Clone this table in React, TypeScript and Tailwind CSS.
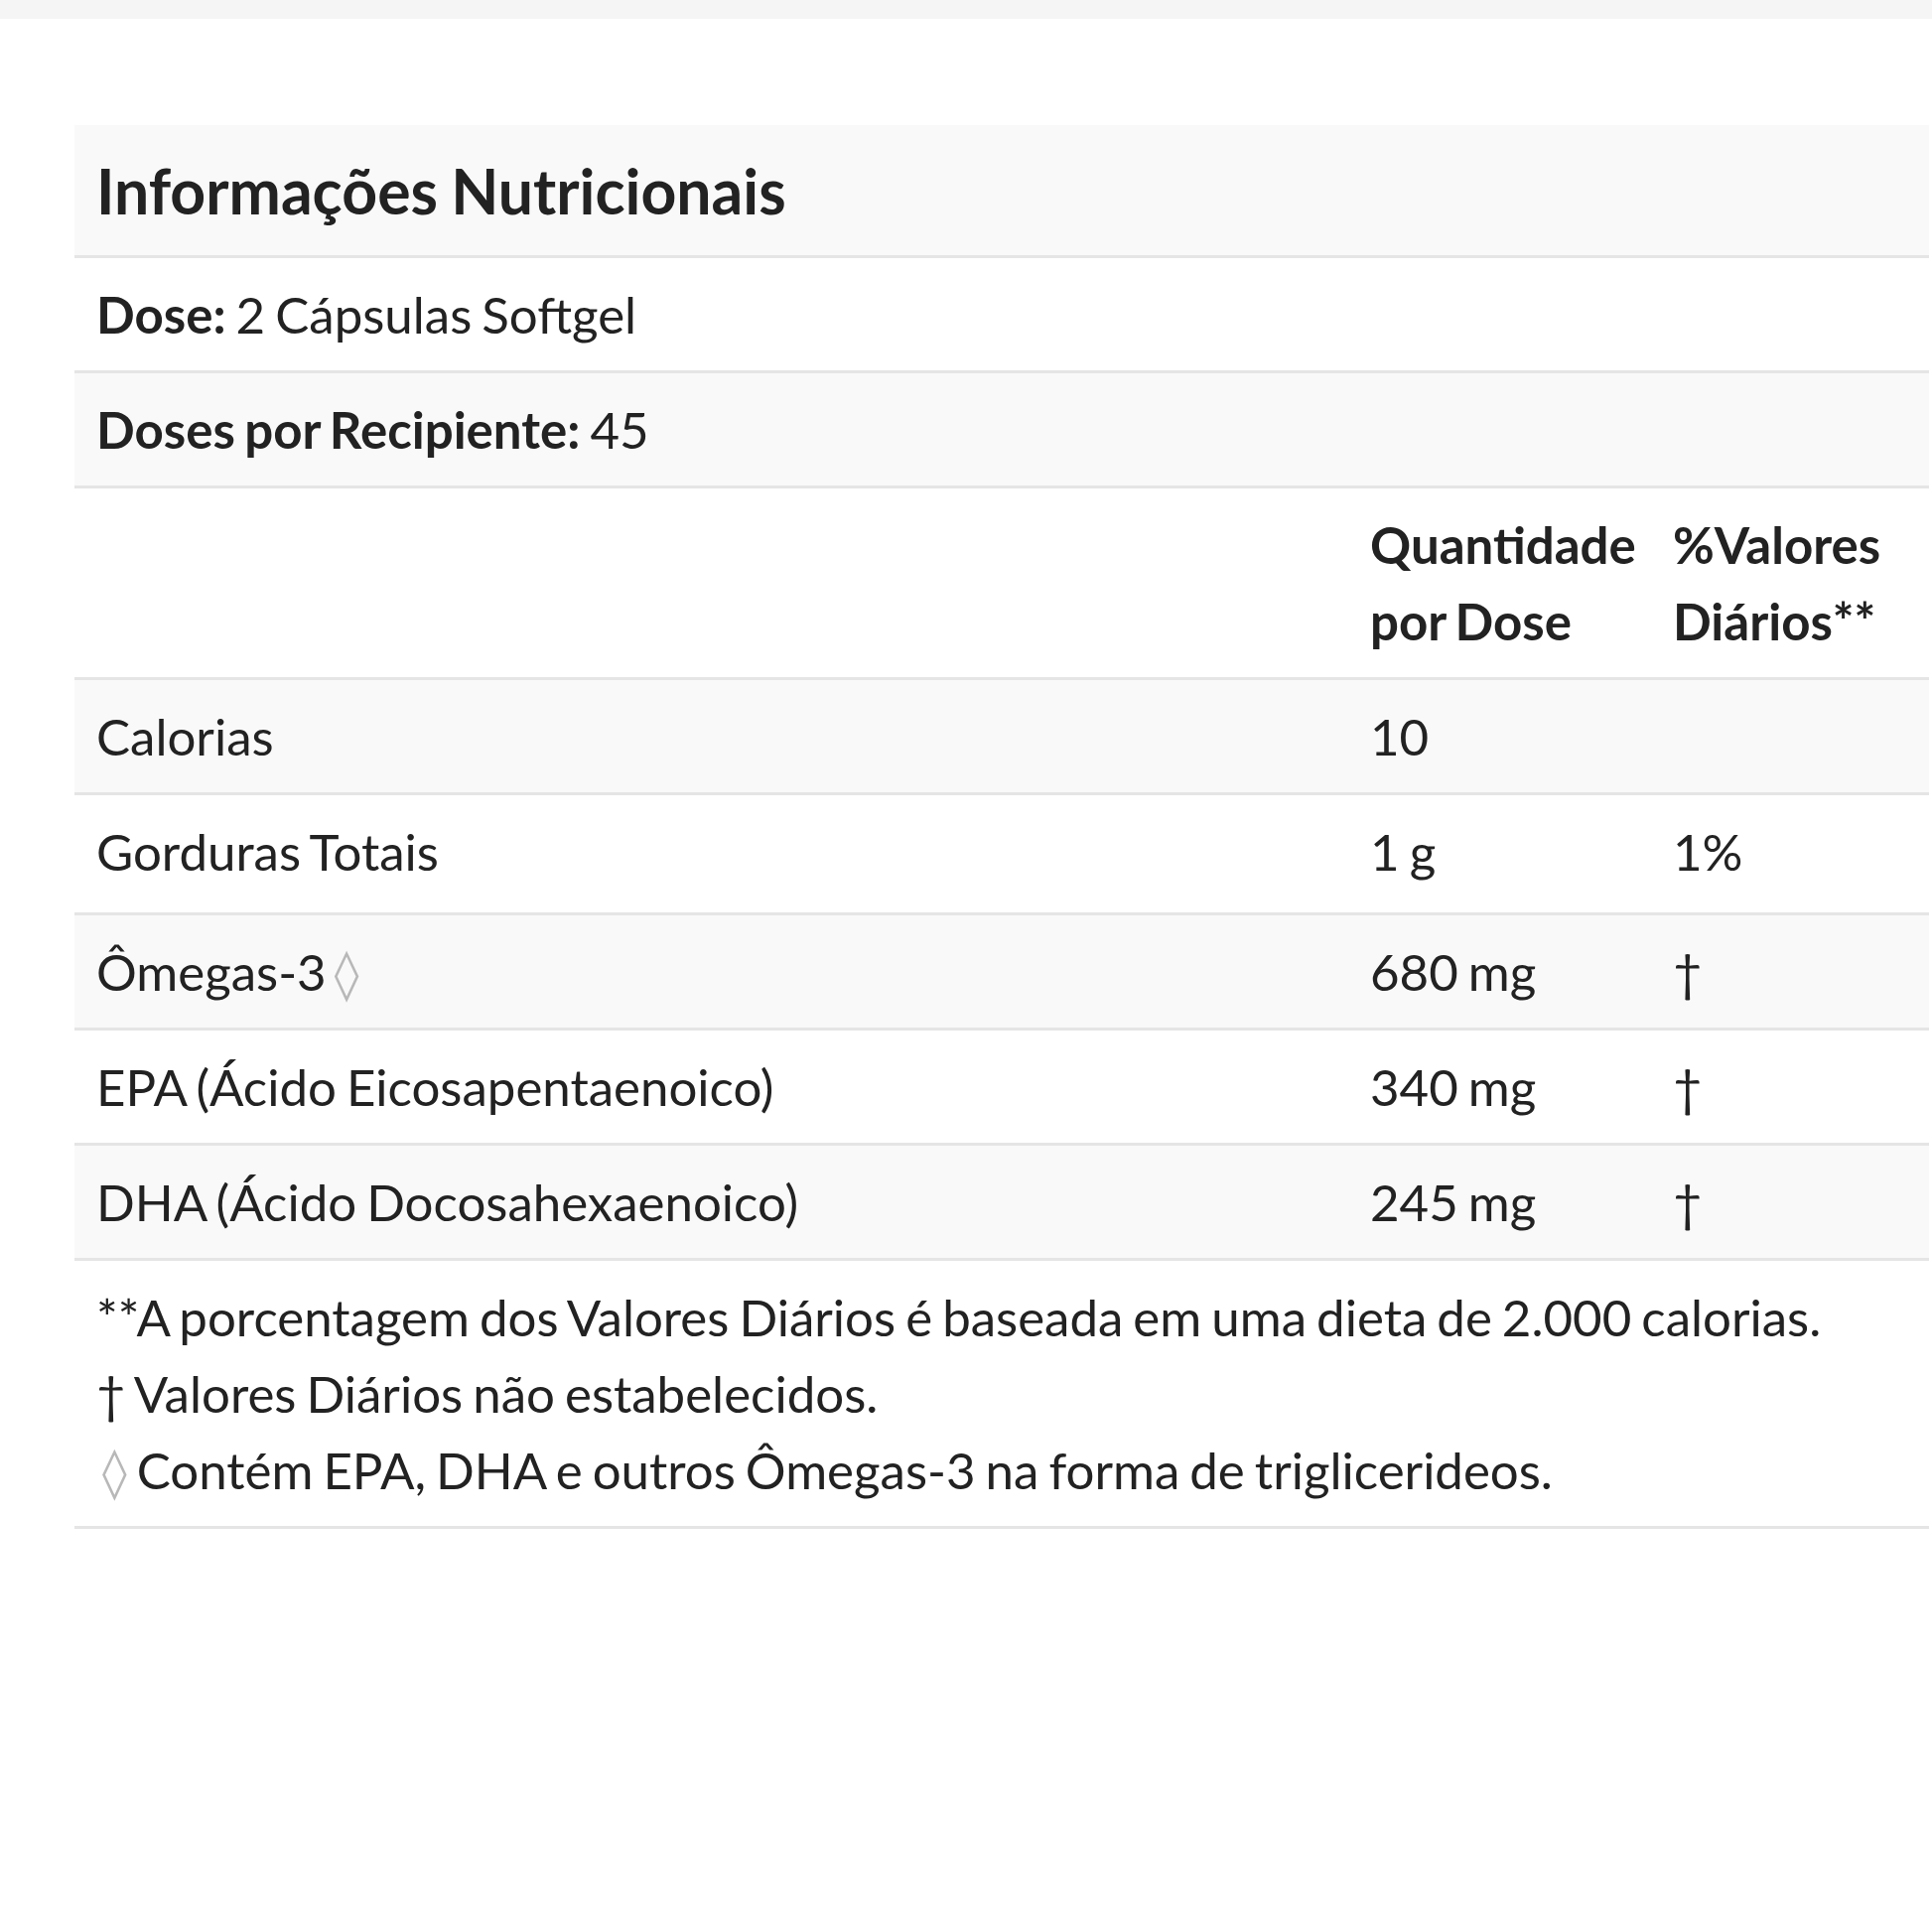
import React from 'react';

const rows = [
  { name: 'Calorias', amount: '10', dv: '' },
  { name: 'Gorduras Totais', amount: '1 g', dv: '1%', tall: true },
  { name: 'Ômegas-3', amount: '680 mg', dv: '†', mark: true },
  { name: 'EPA (Ácido Eicosapentaenoico)', amount: '340 mg', dv: '†' },
  { name: 'DHA (Ácido Docosahexaenoico)', amount: '245 mg', dv: '†' },
];

const Diamond = () => (
  <span className="font-['DejaVu_Sans',sans-serif] text-[50px] leading-[0] text-[#b8b8b8]">◊</span>
);

const Row = ({
  striped,
  tall,
  children,
}: {
  striped?: boolean;
  tall?: boolean;
  children: React.ReactNode;
}) => (
  <div
    className={
      'grid grid-cols-[1283px_305px_1fr] border-b-[3px] border-[#e5e5e5] pt-[18px] ' +
      (tall ? 'pb-[23px] ' : 'pb-[18px] ') +
      (striped ? 'bg-[#f9f9f9]' : 'bg-white')
    }
  >
    {children}
  </div>
);

const App = () => {
  return (
    <div className="min-h-[1946px] bg-white font-['Lato','Open_Sans',sans-serif] text-[51px] leading-[77px] text-[#222] [word-spacing:-3px]">
      <div className="h-[19px] bg-[#f5f5f5]" />

      <div className="ml-[75px] mr-[3px] mt-[107px]">
        <div className="border-b-[3px] border-[#e5e5e5] bg-[#f9f9f9] px-[22px] py-[18px]">
          <h2 className="text-[62.5px] font-bold leading-[95px] [word-spacing:-2px]">Informações Nutricionais</h2>
        </div>

        <div className="border-b-[3px] border-[#e5e5e5] bg-white px-[22px] py-[18px]">
          <span className="font-bold">Dose:</span> 2 Cápsulas Softgel
        </div>

        <div className="border-b-[3px] border-[#e5e5e5] bg-[#f9f9f9] px-[22px] py-[18px]">
          <span className="font-bold">Doses por Recipiente:</span> 45
        </div>

        <Row>
          <div />
          <div className="px-[22px] font-bold">
            Quantidade
            <br />
            por Dose
          </div>
          <div className="px-[22px] font-bold">
            %Valores
            <br />
            Diários**
          </div>
        </Row>

        {rows.map((r, i) => (
          <Row key={r.name} striped={i % 2 === 0} tall={r.tall}>
            <div className="px-[22px]">
              {r.name}
              {r.mark && (
                <span className="ml-[8px]">
                  <Diamond />
                </span>
              )}
            </div>
            <div className="px-[22px]">{r.amount}</div>
            <div className="px-[22px]">{r.dv}</div>
          </Row>
        ))}

        <div className="border-b-[3px] border-[#e5e5e5] bg-white px-[22px] py-[18px]">
          <p>**A porcentagem dos Valores Diários é baseada em uma dieta de 2.000 calorias.</p>
          <p>† Valores Diários não estabelecidos.</p>
          <p>
            <span className="ml-[6px] mr-[10px]">
              <Diamond />
            </span>
            Contém EPA, DHA e outros Ômegas-3 na forma de triglicerideos.
          </p>
        </div>
      </div>
    </div>
  );
};

export default App;
